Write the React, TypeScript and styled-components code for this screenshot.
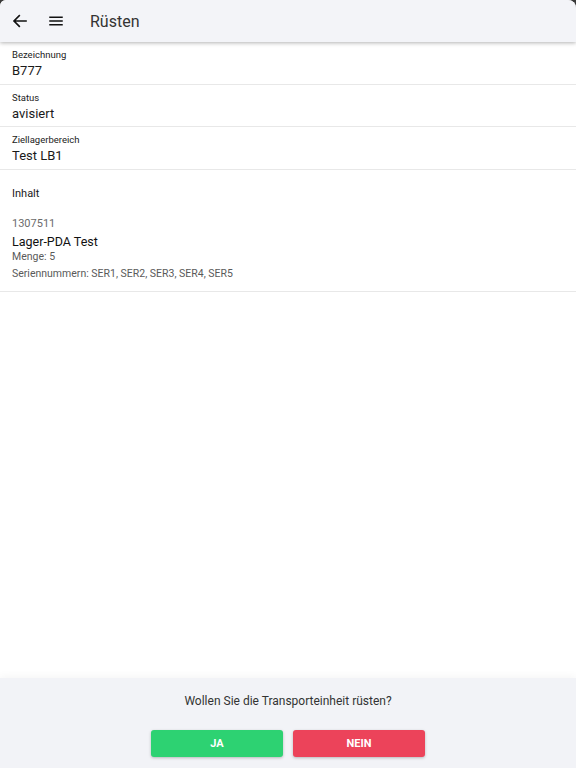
import styled, { createGlobalStyle } from "styled-components";

const GlobalStyle = createGlobalStyle`
  html, body {
    margin: 0;
    padding: 0;
    background: #3a3a3a;
  }
  body {
    font-family: Roboto, "Liberation Sans", sans-serif;
  }
`;

const Screen = styled.div`
  width: 576px;
  height: 768px;
  display: flex;
  flex-direction: column;
  background: #ffffff;
  border-radius: 6px 8px 0 0;
  overflow: hidden;
`;

const Header = styled.header`
  height: 42px;
  flex-shrink: 0;
  display: flex;
  align-items: center;
  background: #f3f4f8;
  box-shadow: 0 1px 4px rgba(0, 0, 0, 0.3);
  position: relative;
  z-index: 1;
`;

const IconButton = styled.button<{ $first?: boolean }>`
  width: 36px;
  height: 42px;
  border: none;
  background: transparent;
  display: flex;
  align-items: center;
  justify-content: center;
  padding: 0;
  margin-left: ${(p) => (p.$first ? "2px" : "0")};
  color: #111;
`;

const Title = styled.h1`
  margin: 0 0 0 16px;
  font-size: 16px;
  font-weight: 400;
  color: #333;
`;

const Content = styled.main`
  flex: 1;
  overflow-y: auto;
`;

const Field = styled.div`
  padding: 7px 12px 4.5px;
  border-bottom: 1px solid #e8e8e8;
`;

const Label = styled.div`
  font-size: 9.5px;
  line-height: 12px;
  color: #222;
`;

const Value = styled.div`
  margin-top: 2px;
  font-size: 13px;
  line-height: 16px;
  color: #1a1a1a;
`;

const Section = styled.section`
  padding: 17px 12px 10px;
  border-bottom: 1px solid #e8e8e8;
`;

const SectionTitle = styled.div`
  font-size: 11px;
  line-height: 14px;
  color: #1a1a1a;
`;

const ItemNumber = styled.div`
  margin-top: 16px;
  font-size: 11px;
  line-height: 14px;
  color: #6b6b6b;
`;

const ItemName = styled.div`
  margin-top: 3px;
  font-size: 12.5px;
  line-height: 16px;
  color: #111;
`;

const ItemMeta = styled.div<{ $gap?: number }>`
  margin-top: ${(p) => p.$gap ?? 0}px;
  font-size: 10.5px;
  line-height: 14px;
  color: #5a5a5a;
`;

const Footer = styled.footer`
  height: 90px;
  flex-shrink: 0;
  background: #f2f3f7;
  box-shadow: 0 -2px 8px rgba(0, 0, 0, 0.04);
  display: flex;
  flex-direction: column;
  align-items: center;
`;

const Question = styled.p`
  margin: 15px 0 0;
  font-size: 12px;
  line-height: 16px;
  color: #333;
`;

const Actions = styled.div`
  display: flex;
  gap: 10px;
  margin-top: 21px;
`;

const ActionButton = styled.button<{ $tone: "yes" | "no" }>`
  width: 132px;
  height: 27px;
  border: none;
  border-radius: 3px;
  background: ${(p) => (p.$tone === "yes" ? "#2dd272" : "#ec435a")};
  color: #fff;
  font-family: Roboto, "Liberation Sans", sans-serif;
  font-size: 11px;
  font-weight: 700;
  box-shadow: 0 1px 3px rgba(0, 0, 0, 0.25);
`;

const fields = [
  { label: "Bezeichnung", value: "B777" },
  { label: "Status", value: "avisiert" },
  { label: "Ziellagerbereich", value: "Test LB1" },
];

export default function App() {
  return (
    <>
      <GlobalStyle />
      <Screen>
        <Header>
          <IconButton $first aria-label="Zurück">
            <svg width="18" height="18" viewBox="0 0 24 24" fill="none" stroke="currentColor" strokeWidth="2.2" strokeLinecap="square">
              <path d="M20 12H5M11 5l-7 7 7 7" />
            </svg>
          </IconButton>
          <IconButton aria-label="Menü">
            <svg width="18" height="18" viewBox="0 0 24 24" fill="currentColor">
              <path d="M3 6h18v2H3zM3 11h18v2H3zM3 16h18v2H3z" />
            </svg>
          </IconButton>
          <Title>Rüsten</Title>
        </Header>
        <Content>
          {fields.map((f) => (
            <Field key={f.label}>
              <Label>{f.label}</Label>
              <Value>{f.value}</Value>
            </Field>
          ))}
          <Section>
            <SectionTitle>Inhalt</SectionTitle>
            <ItemNumber>1307511</ItemNumber>
            <ItemName>Lager-PDA Test</ItemName>
            <ItemMeta>Menge: 5</ItemMeta>
            <ItemMeta $gap={3}>Seriennummern: SER1, SER2, SER3, SER4, SER5</ItemMeta>
          </Section>
        </Content>
        <Footer>
          <Question>Wollen Sie die Transporteinheit rüsten?</Question>
          <Actions>
            <ActionButton $tone="yes">JA</ActionButton>
            <ActionButton $tone="no">NEIN</ActionButton>
          </Actions>
        </Footer>
      </Screen>
    </>
  );
}
